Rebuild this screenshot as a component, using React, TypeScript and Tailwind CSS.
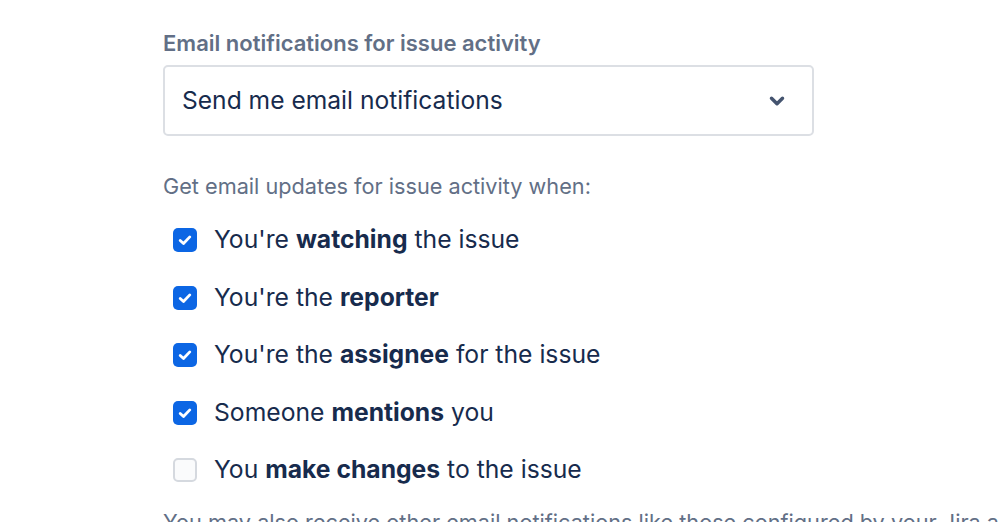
import { ChevronDown } from 'lucide-react'

const rows: { pre: string; bold: string; post: string; checked: boolean }[] = [
  { pre: "You're ", bold: 'watching', post: ' the issue', checked: true },
  { pre: "You're the ", bold: 'reporter', post: '', checked: true },
  { pre: "You're the ", bold: 'assignee', post: ' for the issue', checked: true },
  { pre: 'Someone ', bold: 'mentions', post: ' you', checked: true },
  { pre: 'You ', bold: 'make changes', post: ' to the issue', checked: false },
]

function Box({ checked }: { checked: boolean }) {
  if (!checked) {
    return <span className="w-[24px] h-[24px] rounded-[5px] border-2 border-[#D5D9DF] bg-[#FAFBFC] flex-shrink-0" />
  }
  return (
    <span className="w-[24px] h-[24px] rounded-[5px] bg-[#0C66E4] flex items-center justify-center flex-shrink-0">
      <svg width="24" height="24" viewBox="0 0 24 24" fill="none">
        <path d="M7.2 12.4l3.3 3.1 6.3-6.6" stroke="white" strokeWidth="2.8" strokeLinecap="round" strokeLinejoin="round" />
      </svg>
    </span>
  )
}

export default function App() {
  return (
    <div className="w-[999px] h-[522px] overflow-hidden bg-white font-['Inter',sans-serif]">
      <div className="pl-[163px] pt-[28px]">
        <p className="text-[22px] leading-[30px] font-semibold text-[#626F86]">Email notifications for issue activity</p>

        {/* Select */}
        <div className="mt-[7px] w-[651px] h-[71px] border-2 border-[#DCDFE4] rounded-[5px] flex items-center justify-between pl-[17px] pr-[24px]">
          <span className="text-[24.6px] text-[#172B4D]">Send me email notifications</span>
          <ChevronDown size={22} strokeWidth={3.8} className="text-[#44546F]" />
        </div>

        <p className="mt-[35px] text-[21.7px] leading-[30px] text-[#626F86]">Get email updates for issue activity when:</p>

        <div className="mt-[22px] flex flex-col gap-[23.5px] pl-[10px]">
          {rows.map((r, i) => (
            <label key={i} className="flex items-center gap-[17px] h-[34px]">
              <Box checked={r.checked} />
              <span className="text-[24.7px] text-[#172B4D]">
                {r.pre}
                <b className="font-bold">{r.bold}</b>
                {r.post}
              </span>
            </label>
          ))}
        </div>

        <p className="mt-[20px] text-[21.7px] leading-[30px] text-[#626F86] whitespace-nowrap">
          You may also receive other email notifications like those configured by your Jira admin.
        </p>
      </div>
    </div>
  )
}
